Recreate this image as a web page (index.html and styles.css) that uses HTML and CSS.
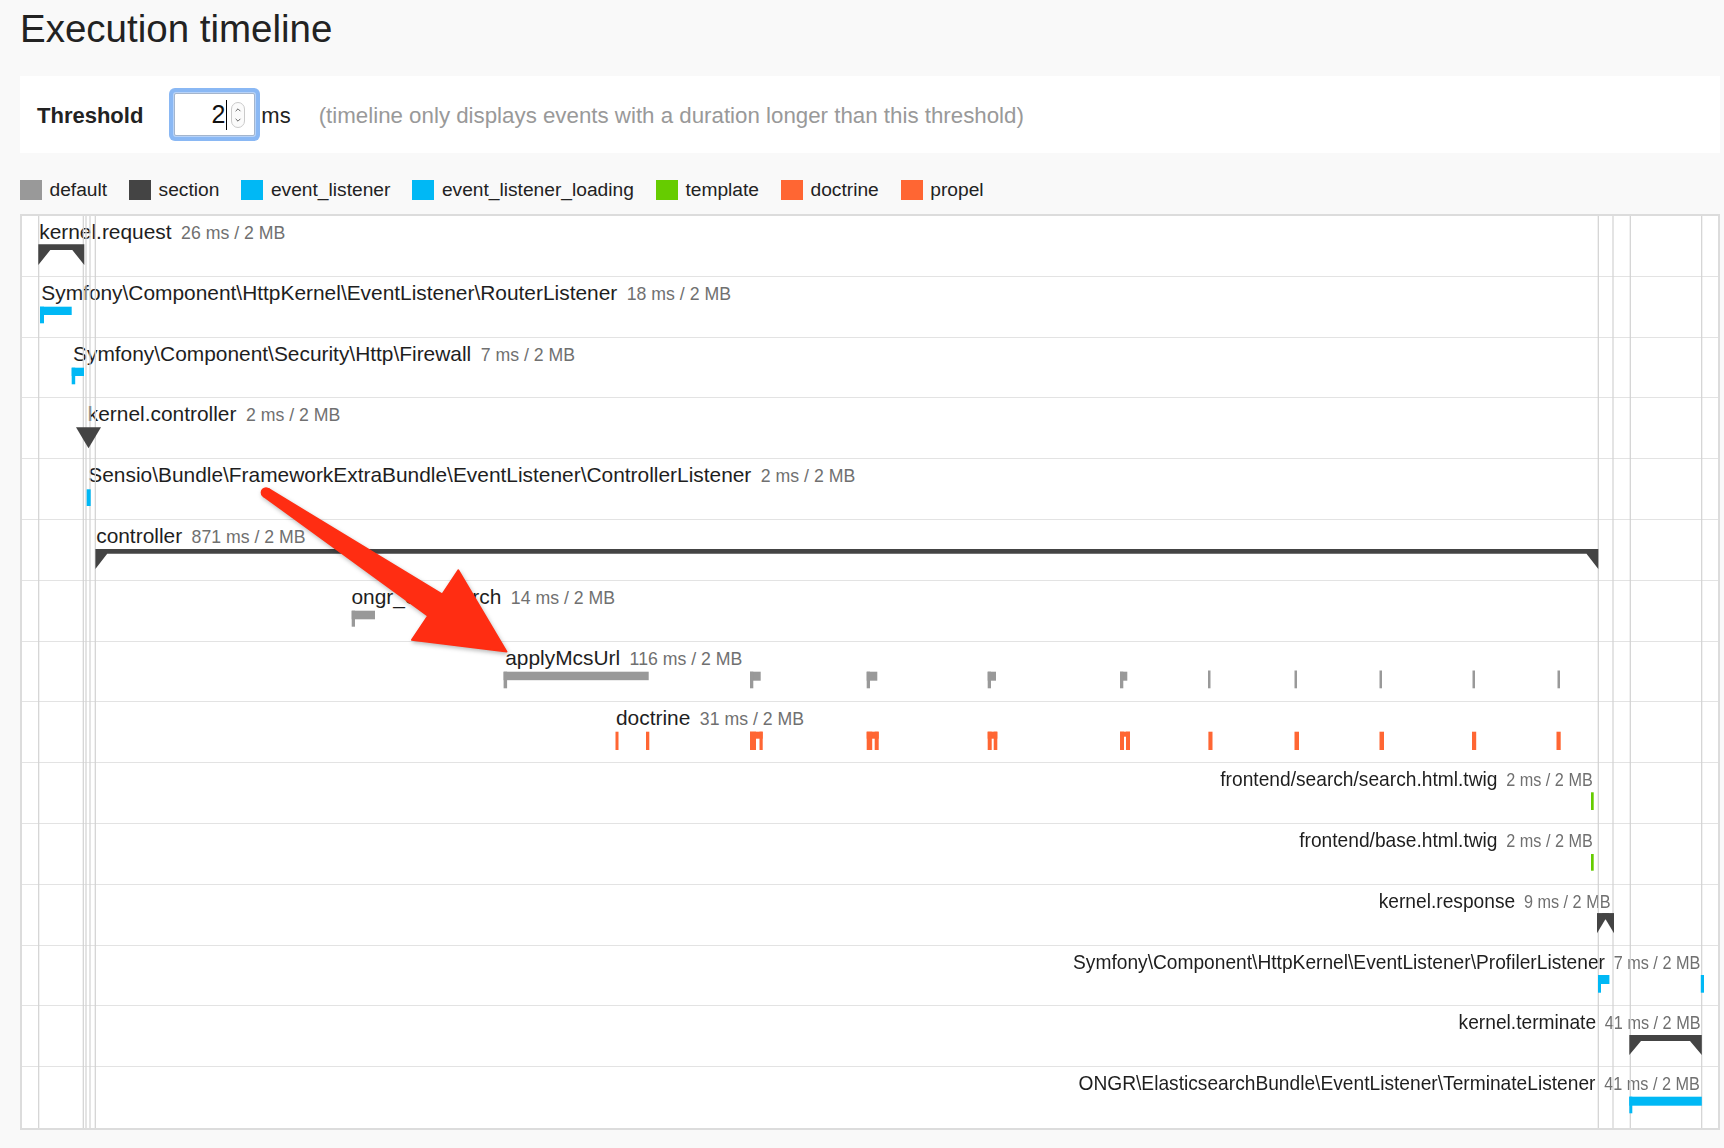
FILE: index.html
```html
<!DOCTYPE html>
<html lang="en">
<head>
<meta charset="utf-8">
<title>Execution timeline</title>
<link rel="stylesheet" href="styles.css">
</head>
<body>
<div class="page">
  <h2 class="title">Execution timeline</h2>

  <div class="threshold">
    <span class="th-label">Threshold</span>
    <div class="num-input">
      <span class="num-value">2</span><span class="caret"></span>
      <svg class="spinner" width="14" height="26" viewBox="0 0 14 26">
        <rect x="0.5" y="0.5" width="13" height="25" rx="6.5" fill="#fbfbfb" stroke="#cacaca"/>
        <path d="M4.6 9.2 L7 6.8 L9.4 9.2" fill="none" stroke="#666" stroke-width="1"/>
        <path d="M4.6 16.8 L7 19.2 L9.4 16.8" fill="none" stroke="#666" stroke-width="1"/>
      </svg>
    </div>
    <span class="unit">ms</span>
    <span class="hint">(timeline only displays events with a duration longer than this threshold)</span>
  </div>

  <ul class="legend">
    <li class="legend-item"><span class="swatch c-default"></span>default</li>
    <li class="legend-item"><span class="swatch c-section"></span>section</li>
    <li class="legend-item"><span class="swatch c-listener"></span>event_listener</li>
    <li class="legend-item"><span class="swatch c-listener"></span>event_listener_loading</li>
    <li class="legend-item"><span class="swatch c-template"></span>template</li>
    <li class="legend-item"><span class="swatch c-doctrine"></span>doctrine</li>
    <li class="legend-item"><span class="swatch c-doctrine"></span>propel</li>
  </ul>

  <div class="timeline">
    <div class="row"><div class="label" style="left:17.2px"><span class="name">kernel.request</span><span class="detail">26 ms / 2 MB</span></div></div>
    <div class="row"><div class="label" style="left:19.3px"><span class="name">Symfony\Component\HttpKernel\EventListener\RouterListener</span><span class="detail">18 ms / 2 MB</span></div></div>
    <div class="row"><div class="label" style="left:51px"><span class="name">Symfony\Component\Security\Http\Firewall</span><span class="detail">7 ms / 2 MB</span></div></div>
    <div class="row"><div class="label" style="left:65.8px"><span class="name">kernel.controller</span><span class="detail">2 ms / 2 MB</span></div></div>
    <div class="row"><div class="label" style="left:66.3px"><span class="name">Sensio\Bundle\FrameworkExtraBundle\EventListener\ControllerListener</span><span class="detail">2 ms / 2 MB</span></div></div>
    <div class="row"><div class="label" style="left:74.2px"><span class="name">controller</span><span class="detail">871 ms / 2 MB</span></div></div>
    <div class="row"><div class="label" style="left:329.5px"><span class="name">ongr_es_search</span><span class="detail">14 ms / 2 MB</span></div></div>
    <div class="row"><div class="label" style="left:483.2px"><span class="name">applyMcsUrl</span><span class="detail">116 ms / 2 MB</span></div></div>
    <div class="row"><div class="label" style="left:594px"><span class="name">doctrine</span><span class="detail">31 ms / 2 MB</span></div></div>
    <div class="row"><div class="label right" style="right:125.5px"><span class="name">frontend/search/search.html.twig</span><span class="detail">2 ms / 2 MB</span></div></div>
    <div class="row"><div class="label right" style="right:125.5px"><span class="name">frontend/base.html.twig</span><span class="detail">2 ms / 2 MB</span></div></div>
    <div class="row"><div class="label right" style="right:107.5px"><span class="name">kernel.response</span><span class="detail">9 ms / 2 MB</span></div></div>
    <div class="row"><div class="label right" style="right:18px"><span class="name">Symfony\Component\HttpKernel\EventListener\ProfilerListener</span><span class="detail">7 ms / 2 MB</span></div></div>
    <div class="row"><div class="label right" style="right:18px"><span class="name">kernel.terminate</span><span class="detail">41 ms / 2 MB</span></div></div>
    <div class="row"><div class="label right" style="right:18px"><span class="name">ONGR\ElasticsearchBundle\EventListener\TerminateListener</span><span class="detail">41 ms / 2 MB</span></div></div>

    <svg class="chart" width="1696" height="912" viewBox="22 216 1696 912">
      <g class="gridlines">
        <line x1="38.7" y1="216" x2="38.7" y2="1128"/>
        <line x1="83.3" y1="216" x2="83.3" y2="1128"/>
        <line x1="86" y1="216" x2="86" y2="1128"/>
        <line x1="90" y1="216" x2="90" y2="1128"/>
        <line x1="95.3" y1="216" x2="95.3" y2="1128"/>
        <line x1="1598.3" y1="216" x2="1598.3" y2="1128"/>
        <line x1="1613" y1="216" x2="1613" y2="1128"/>
        <line x1="1630.3" y1="216" x2="1630.3" y2="1128"/>
        <line x1="1701.7" y1="216" x2="1701.7" y2="1128"/>
      </g>
      <g class="b-section">
        <polygon points="38.3,244.3 84.3,244.3 84.3,265 72.3,250 50.3,250 38.3,265"/>
        <polygon points="76,427.3 101,427.3 88.5,448.3"/>
        <polygon points="95.4,549 1598.3,549 1598.3,569 1586.5,553.8 107.2,553.8 95.4,569"/>
        <rect x="1597" y="913.3" width="17" height="6"/>
        <polygon points="1597,913.3 1609,913.3 1597,933.3"/>
        <polygon points="1614,913.3 1602,913.3 1614,933.3"/>
        <polygon points="1629.3,1035 1701.8,1035 1701.8,1055 1690,1041 1641,1041 1629.3,1055"/>
      </g>
      <g class="b-listener">
        <rect x="40" y="306.7" width="31.7" height="8.3"/><rect x="40" y="306.7" width="4" height="16.6"/>
        <rect x="71.7" y="367.7" width="12.3" height="8.3"/><rect x="71.7" y="367.7" width="3.5" height="16.6"/>
        <rect x="86.7" y="489.3" width="4" height="16.7"/>
        <rect x="1598" y="975" width="11.4" height="9"/><rect x="1598" y="975" width="3" height="17.7"/>
        <rect x="1700.8" y="975" width="3.2" height="17.7"/>
        <rect x="1629.3" y="1096.7" width="72.5" height="9"/><rect x="1629.3" y="1096.7" width="3" height="16.6"/>
      </g>
      <g class="b-default">
        <rect x="351.7" y="610.7" width="23.3" height="8.6"/><rect x="351.7" y="610.7" width="3.3" height="16"/>
        <rect x="503.6" y="671.7" width="145.1" height="8.5"/><rect x="503.6" y="671.7" width="3.5" height="16.6"/>
        <rect x="750" y="671.7" width="10.7" height="9"/><rect x="750" y="671.7" width="3.3" height="16.6"/>
        <rect x="866.7" y="671.7" width="10.6" height="9"/><rect x="866.7" y="671.7" width="3.3" height="16.6"/>
        <rect x="987.7" y="671.7" width="8.3" height="9"/><rect x="987.7" y="671.7" width="3.3" height="16.6"/>
        <rect x="1120" y="671.7" width="7.3" height="9"/><rect x="1120" y="671.7" width="3.3" height="16.6"/>
        <rect x="1208" y="670.5" width="2.5" height="17.8"/>
        <rect x="1294.5" y="670.5" width="2.5" height="17.8"/>
        <rect x="1379.5" y="670.5" width="2.5" height="17.8"/>
        <rect x="1472.5" y="670.5" width="2.5" height="17.8"/>
        <rect x="1557.5" y="670.5" width="2.5" height="17.8"/>
      </g>
      <g class="b-doctrine">
        <rect x="615.5" y="731.7" width="3" height="18.3"/>
        <rect x="646" y="731.7" width="3.3" height="18.3"/>
        <rect x="750" y="731.7" width="12.7" height="7"/><rect x="750" y="731.7" width="6" height="18.3"/><rect x="759.5" y="731.7" width="3.2" height="18.3"/>
        <rect x="866.7" y="731.7" width="12" height="7"/><rect x="866.7" y="731.7" width="5.5" height="18.3"/><rect x="874.7" y="731.7" width="4" height="18.3"/>
        <rect x="987.7" y="731.7" width="9.6" height="7"/><rect x="987.7" y="731.7" width="4" height="18.3"/><rect x="993.7" y="731.7" width="3.6" height="18.3"/>
        <rect x="1120" y="731.7" width="10" height="5"/><rect x="1120" y="731.7" width="4" height="18.3"/><rect x="1126" y="731.7" width="4" height="18.3"/>
        <rect x="1208.4" y="731.7" width="4.1" height="18.3"/>
        <rect x="1294.5" y="731.7" width="4.5" height="18.3"/>
        <rect x="1379.5" y="731.7" width="4.5" height="18.3"/>
        <rect x="1472" y="731.7" width="4.2" height="18.3"/>
        <rect x="1556.5" y="731.7" width="4.2" height="18.3"/>
      </g>
      <g class="b-template">
        <rect x="1591" y="792.3" width="2.7" height="17.7"/>
        <rect x="1591" y="854" width="2.7" height="16.7"/>
      </g>
    </svg>
  </div>
</div>

<svg class="annotation" width="1724" height="1148" viewBox="0 0 1724 1148">
  <polygon class="arrow" points="268.5,488.7 442.2,594.2 458.3,570 506.7,651.7 411.7,640 427.8,615.8 263.5,496.3"/>
  <circle class="arrow" cx="266" cy="492.5" r="4.6"/>
</svg>
</body>
</html>
```

FILE: styles.css
```css
html, body {
  margin: 0;
  padding: 0;
}

body {
  background: #f9f9f9;
  font-family: "Liberation Sans", Arial, Helvetica, sans-serif;
  color: #222;
  position: relative;
  width: 1724px;
  height: 1148px;
  overflow: hidden;
}

.page {
  padding: 6px 0 0 20px;
  width: 1700px;
}

.title {
  margin: 0;
  padding-left: 0;
  font-size: 38.5px;
  line-height: 46px;
  font-weight: normal;
  color: #222;
}

/* threshold bar */
.threshold {
  margin-top: 24px;
  height: 77px;
  box-sizing: border-box;
  background: #fff;
  display: flex;
  align-items: baseline;
  padding: 17px 0 0 17px;
}

.th-label {
  font-size: 22px;
  font-weight: bold;
  color: #222;
}

.num-input {
  margin-left: 31px;
  width: 81px;
  height: 43px;
  box-sizing: border-box;
  border: 1px solid #a4b5cc;
  border-radius: 2px;
  background: #fff;
  box-shadow: 0 0 0 1px #b8d3f8, 0 0 0 5px #8ab8f4;
  display: flex;
  align-items: center;
  justify-content: flex-end;
  padding-right: 9px;
}

.num-value {
  font-size: 25px;
  line-height: 25px;
  color: #111;
}

.caret {
  width: 1px;
  height: 30px;
  background: #000;
  margin: 0 4px 0 1px;
}

.spinner {
  display: block;
}

.unit {
  margin-left: 6px;
  font-size: 22px;
  color: #222;
}

.hint {
  margin-left: 28px;
  font-size: 22.3px;
  color: #999;
}

/* legend */
.legend {
  list-style: none;
  margin: 27px 0 14px 0;
  padding: 0;
  height: 20px;
  display: flex;
  align-items: center;
}

.legend-item {
  display: flex;
  align-items: center;
  font-size: 19.2px;
  line-height: 20px;
  color: #222;
  margin-right: 22px;
}

.swatch {
  width: 22px;
  height: 20px;
  margin-right: 7.5px;
}

.c-default { background: #999; }
.c-section { background: #444; }
.c-listener { background: #00b8f5; }
.c-template { background: #66cc00; }
.c-doctrine { background: #ff6633; }

/* timeline */
.timeline {
  position: relative;
  background: #fff;
  border: 2px solid #dcdcdc;
  width: 1700px;
  box-sizing: border-box;
}

.row {
  position: relative;
  height: 60.8px;
  box-sizing: border-box;
  border-bottom: 1px solid #e3e3e3;
}

.row:last-of-type {
  border-bottom: none;
}

.label {
  position: absolute;
  top: 6px;
  white-space: nowrap;
  font-size: 20.9px;
  line-height: 20px;
  color: #1e1e1e;
}

.label.right {
  transform: scaleX(0.918);
  transform-origin: right center;
}

.detail {
  margin-left: 9.5px;
  font-size: 17.7px;
  color: #707070;
}

.chart {
  position: absolute;
  top: 0;
  left: 0;
  display: block;
}

.gridlines line {
  stroke: #d2d2d2;
  stroke-width: 1.2;
}

.b-section { fill: #444; }
.b-listener { fill: #00b8f5; }
.b-default { fill: #999; }
.b-doctrine { fill: #ff6633; }
.b-template { fill: #66cc00; }

/* annotation arrow */
.annotation {
  position: absolute;
  top: 0;
  left: 0;
  pointer-events: none;
  filter: drop-shadow(1px 2px 2px rgba(0, 0, 0, 0.28));
}

.arrow {
  fill: #ff2d12;
  stroke: #ff2d12;
  stroke-width: 1.5;
  stroke-linejoin: round;
}
```
